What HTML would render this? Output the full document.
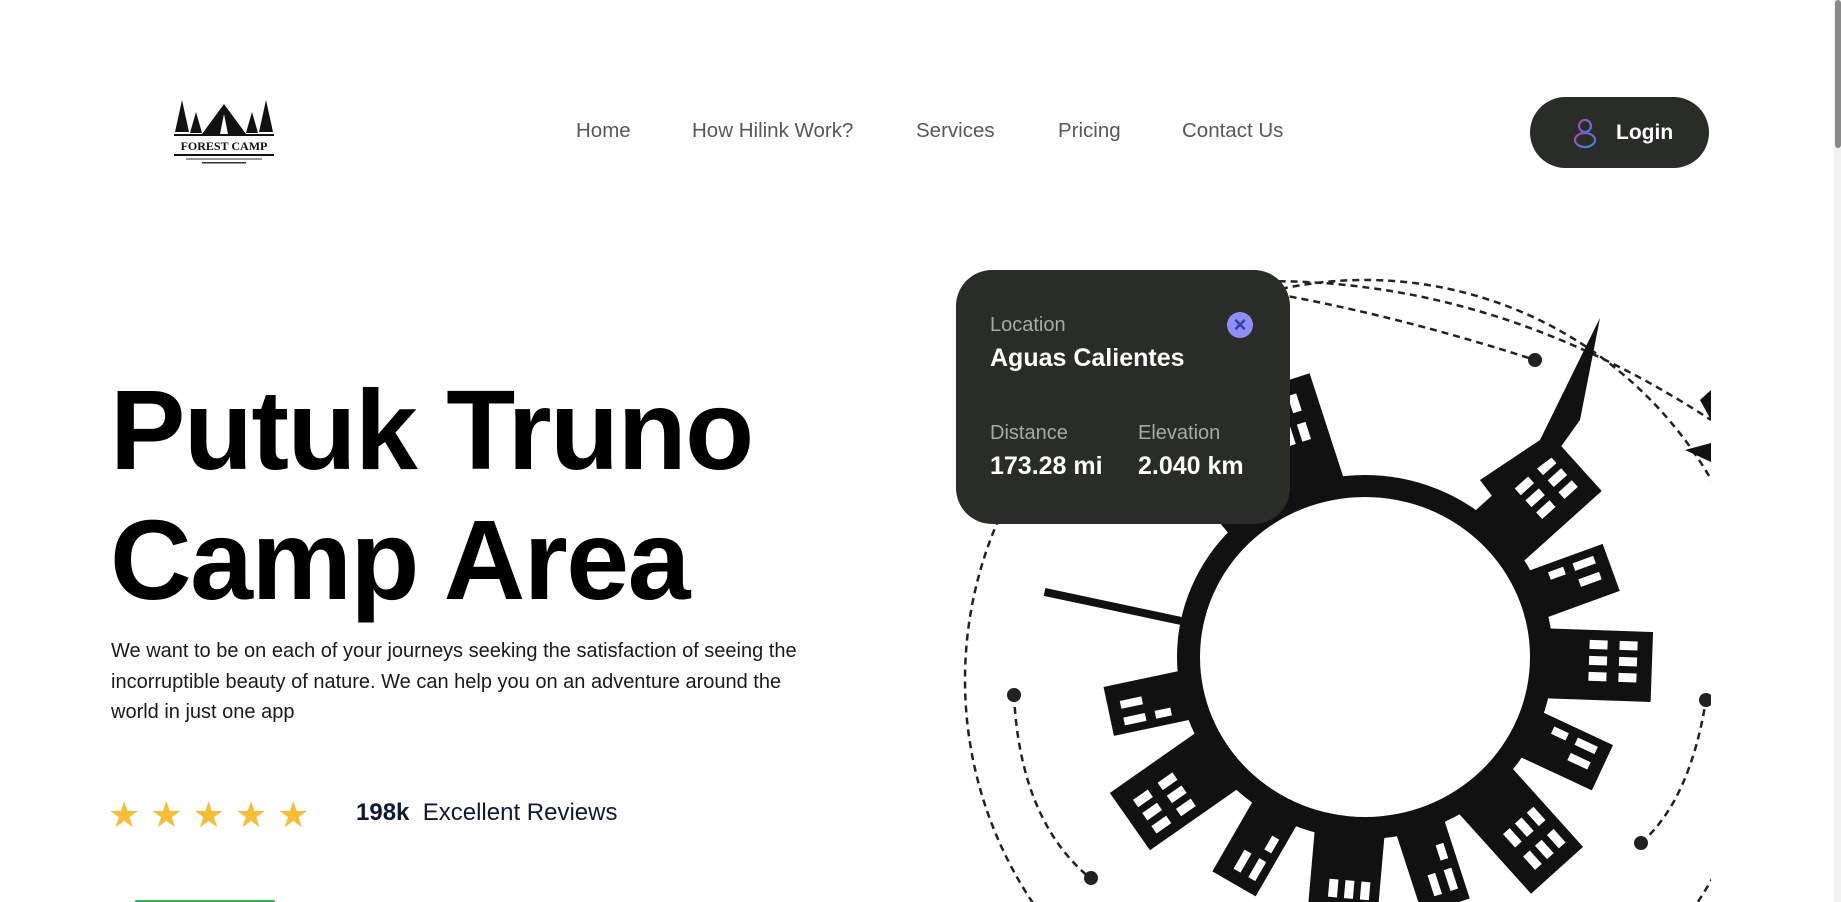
<!DOCTYPE html>
<html><head><meta charset="utf-8"><style>
*{margin:0;padding:0;box-sizing:border-box}
html,body{width:1841px;height:902px;overflow:hidden;background:#fff;font-family:"Liberation Sans",Arial,sans-serif}
.abs{position:absolute}
.nav a{position:absolute;top:119px;font-size:20.5px;color:#585858;text-decoration:none;white-space:nowrap}
.login{left:1530px;top:97px;width:179px;height:71px;border-radius:36px;background:#292c27;color:#fff;font-weight:bold;font-size:21px}
h1{position:absolute;left:110px;top:365px;font-size:113px;line-height:130px;font-weight:bold;color:#000;letter-spacing:-1.5px}
p.d{position:absolute;left:111px;top:636px;width:715px;font-size:20px;line-height:30.5px;color:#1a1a1a}
.card{left:956px;top:270px;width:334px;height:254px;border-radius:36px;background:#292c27;color:#fff}
.lbl{font-size:20px;color:#a9aaa6}
.val{font-size:25px;font-weight:bold;color:#fff}
</style></head><body>
<svg class="abs" style="left:172px;top:98px" width="104" height="68" viewBox="0 0 104 68">
<polygon points="10,2 3,34 17,34" fill="#111"/><polygon points="24,14 18,35 30,35" fill="#111"/>
<polygon points="94,2 87,34 101,34" fill="#111"/><polygon points="80,14 74,35 86,35" fill="#111"/>
<polygon points="52,6 30,36 74,36" fill="#111"/><polygon points="52,16 48,36 56,36" fill="#fff"/>
<rect x="2" y="36" width="100" height="2" fill="#111"/>
<text x="52" y="52" text-anchor="middle" font-family="Liberation Serif,serif" font-size="12" font-weight="bold" fill="#111">FOREST CAMP</text>
<rect x="2" y="56" width="100" height="2" fill="#111"/><rect x="14" y="60" width="76" height="2" fill="#999"/><rect x="30" y="64" width="44" height="1.5" fill="#333"/>
</svg>
<div class="nav"><a style="left:576px">Home</a><a style="left:692px">How Hilink Work?</a><a style="left:916px">Services</a><a style="left:1058px">Pricing</a><a style="left:1182px">Contact Us</a></div>
<div class="abs login"><svg class="abs" style="left:43px;top:20px" width="24" height="32" viewBox="0 0 24 32"><defs><linearGradient id="g" x1="0" y1="0" x2="1" y2="1"><stop offset="0" stop-color="#b33fb0"/><stop offset="1" stop-color="#2f8fe0"/></linearGradient></defs><circle cx="12" cy="9" r="6" fill="none" stroke="url(#g)" stroke-width="2.2"/><ellipse cx="12" cy="23" rx="10" ry="7" fill="none" stroke="url(#g)" stroke-width="2.2"/></svg><span class="abs" style="left:86px;top:24px">Login</span></div>
<h1>Putuk Truno<br>Camp Area</h1>
<p class="d">We want to be on each of your journeys seeking the satisfaction of seeing the incorruptible beauty of nature. We can help you on an adventure around the world in just one app</p>
<div class="abs" style="left:108px;top:794px;font-size:36px;color:#f6bd36;letter-spacing:10px">★★★★★</div>
<div class="abs" style="left:356px;top:799px;font-size:24px;color:#0c1a3a"><b>198k</b>&nbsp; Excellent Reviews</div>
<div class="abs" style="left:135px;top:900px;width:140px;height:2px;border-radius:2px;background:#30af5b"></div>
<svg class="abs" style="left:0;top:0" width="1711" height="902" viewBox="0 0 1711 902">
<defs>
<g id="bd"><rect x="1330" y="370" width="70" height="110" fill="#111"/>
<rect x="1340" y="385" width="9" height="18" fill="#fff"/><rect x="1356" y="385" width="9" height="18" fill="#fff"/><rect x="1372" y="385" width="9" height="18" fill="#fff"/>
<rect x="1340" y="415" width="9" height="18" fill="#fff"/><rect x="1356" y="415" width="9" height="18" fill="#fff"/><rect x="1372" y="415" width="9" height="18" fill="#fff"/></g>
<g id="bs"><rect x="1340" y="395" width="50" height="85" fill="#111"/>
<rect x="1348" y="408" width="8" height="22" fill="#fff"/><rect x="1365" y="408" width="8" height="22" fill="#fff"/><rect x="1348" y="440" width="8" height="16" fill="#fff"/></g>
</defs>
<g fill="none" stroke="#222" stroke-width="2.5" stroke-dasharray="7 5">
<circle cx="1365" cy="680" r="400"/><path d="M1100 300 Q1420 230 1711 420"/>
<path d="M1183 280 Q1350 300 1535 360"/><path d="M1014 695 Q1020 820 1090 878"/><path d="M1641 843 Q1690 800 1706 700"/>
</g>
<g fill="#222"><circle cx="1535" cy="360" r="7"/><circle cx="1014" cy="695" r="7"/><circle cx="1091" cy="878" r="7"/><circle cx="1641" cy="843" r="7"/><circle cx="1706" cy="700" r="7"/></g>
<use href="#bd" transform="rotate(-18 1365 657)"/>
<use href="#bs" transform="rotate(-40 1365 657)"/>
<use href="#bd" transform="rotate(48 1365 657)"/>
<use href="#bs" transform="rotate(70 1365 657)"/>
<use href="#bd" transform="rotate(92 1365 657)"/>
<use href="#bs" transform="rotate(115 1365 657)"/>
<use href="#bd" transform="rotate(138 1365 657)"/>
<use href="#bs" transform="rotate(162 1365 657)"/>
<use href="#bd" transform="rotate(185 1365 657)"/>
<use href="#bs" transform="rotate(210 1365 657)"/>
<use href="#bd" transform="rotate(235 1365 657)"/>
<use href="#bs" transform="rotate(258 1365 657)"/>
<g fill="#111">
<polygon points="1600,318 1594,330 1540,440 1480,480 1495,500 1555,455 1580,420"/>
<rect x="1358" y="330" width="8" height="150" transform="rotate(-78 1365 657)"/>
<polygon points="1700,400 1711,390 1711,420"/><polygon points="1685,450 1711,443 1711,462"/>
<ellipse cx="1365" cy="657" rx="188" ry="182"/>
</g>
<ellipse cx="1365" cy="657" rx="165" ry="160" fill="#fff"/>
</svg>
<div class="abs card">
<div class="abs lbl" style="left:34px;top:44px">Location</div>
<div class="abs val" style="left:34px;top:74px">Aguas Calientes</div>
<div class="abs" style="left:271px;top:42px;width:26px;height:26px;border-radius:50%;background:#8f8ef5;color:#3c3aa8;font-size:22px;line-height:26px;text-align:center;font-weight:bold">×</div>
<div class="abs lbl" style="left:34px;top:152px">Distance</div>
<div class="abs val" style="left:34px;top:182px">173.28 mi</div>
<div class="abs lbl" style="left:182px;top:152px">Elevation</div>
<div class="abs val" style="left:182px;top:182px">2.040 km</div>
</div>
<div class="abs" style="left:1834px;top:0;width:7px;height:902px;background:#f1f1f1"></div>
<div class="abs" style="left:1835px;top:0;width:6px;height:148px;background:#8a8a8a;border-radius:3px"></div>
</body></html>
